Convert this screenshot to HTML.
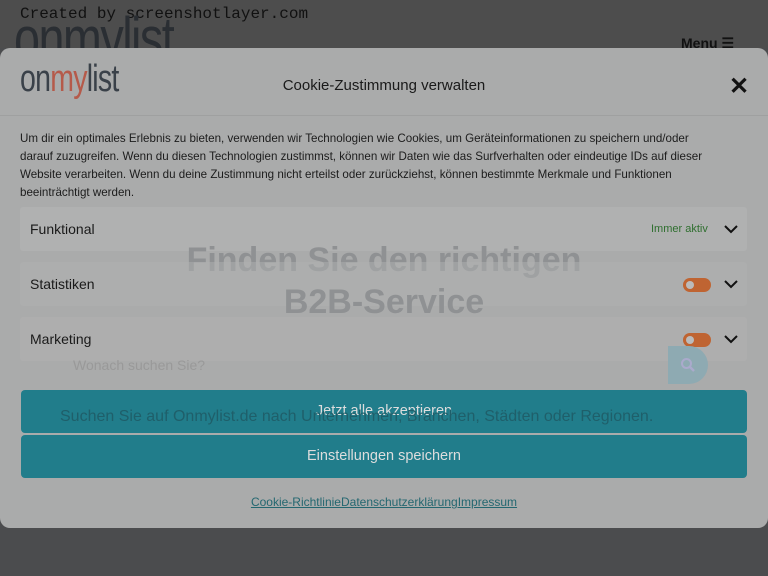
<!DOCTYPE html>
<html><head><meta charset="utf-8"><style>
*{margin:0;padding:0;box-sizing:border-box}
body{width:768px;height:576px;overflow:hidden;background:#4b4c4e;font-family:"Liberation Sans",sans-serif;position:relative}
.top{position:absolute;left:0;top:0;width:768px;height:48px;background:#4d4d4d}
.cr{position:absolute;left:20px;top:5px;font-family:"Liberation Mono",monospace;font-size:16px;color:#111}
.biglogo{position:absolute;left:14px;top:4px;font-size:60px;letter-spacing:-2px;color:#2a2e33;font-family:"Liberation Sans Narrow","Liberation Sans",sans-serif;transform:scaleX(.78);transform-origin:left}
.menu{position:absolute;left:681px;top:35px;font-size:14px;font-weight:bold;color:#111}
.modal{position:absolute;left:0;top:48px;width:768px;height:480px;background:#aaabab;border-radius:10px}
.logo{position:absolute;left:20px;top:10px;font-size:38px;color:#3a4149;letter-spacing:-1px;font-family:"Liberation Sans Narrow","Liberation Sans",sans-serif;transform:scaleX(.75);transform-origin:left}
.logo span{color:#b55a4a}
.title{position:absolute;left:0;width:768px;top:29px;text-align:center;font-size:15px;color:#1a1a1a}
.x{position:absolute;left:729px;top:24px;font-size:24px;font-weight:bold;color:#111}
.hr{position:absolute;left:0;top:67px;width:768px;height:1px;background:#9fa0a0}
.txt{position:absolute;left:20px;top:82px;width:705px;font-size:11.6px;line-height:18px;color:#1c1c1c}
.row{position:absolute;left:20px;width:727px;height:44px;background:#b0b1b1;border-radius:3px}
.row .l{position:absolute;left:10px;top:14px;font-size:14px;color:#1a1a1a}
.chev{position:absolute;left:703px;top:16px}
.tog{position:absolute;left:663px;top:16px;width:28px;height:14px;border-radius:7px;background:#bf6432}
.tog:after{content:"";position:absolute;left:3px;top:3px;width:8px;height:8px;border-radius:50%;background:#bbb}
.bg1{position:absolute;left:0;width:768px;text-align:center;font-size:34px;font-weight:bold;color:#8f9193}
.btn{position:absolute;left:21px;width:726px;height:43px;background:#217d8b;border-radius:4px;color:#ddd;text-align:center;font-size:14.5px;line-height:43px}
.sub{position:absolute;left:60px;top:360px;font-size:16px;color:#1f5f6a}
.links{position:absolute;left:0;width:768px;top:447px;text-align:center;font-size:12px;color:#246770;text-decoration:underline}
.search{position:absolute;left:668px;top:298px;width:40px;height:38px;background:#8eaab2;border-radius:0 19px 19px 0}
</style></head><body>
<div class="top"></div>
<div class="cr">Created by screenshotlayer.com</div>
<div class="biglogo">onmylist</div>
<div class="menu">Menu ☰</div>
<div class="modal">
 <div class="logo">on<span>my</span>list</div>
 <div class="title">Cookie-Zustimmung verwalten</div>
 <div class="x">✕</div>
 <div class="hr"></div>
 <div class="txt">Um dir ein optimales Erlebnis zu bieten, verwenden wir Technologien wie Cookies, um Geräteinformationen zu speichern und/oder<br>darauf zuzugreifen. Wenn du diesen Technologien zustimmst, können wir Daten wie das Surfverhalten oder eindeutige IDs auf dieser<br>Website verarbeiten. Wenn du deine Zustimmung nicht erteilst oder zurückziehst, können bestimmte Merkmale und Funktionen<br>beeinträchtigt werden.</div>
 <div class="row" style="top:159px"><div class="l">Funktional</div><div style="position:absolute;left:631px;top:16px;font-size:11px;color:#2f6f2f">Immer aktiv</div><svg class="chev" width="16" height="12" viewBox="0 0 16 12"><path d="M2 3l6 6 6-6" stroke="#111" stroke-width="2" fill="none"/></svg></div>
 <div class="bg1" style="top:193px">Finden Sie den richtigen</div>
 <div class="row" style="top:214px;background:rgba(176,177,177,.5)"><div class="l">Statistiken</div><div class="tog"></div><svg class="chev" width="16" height="12" viewBox="0 0 16 12"><path d="M2 3l6 6 6-6" stroke="#111" stroke-width="2" fill="none"/></svg></div>
 <div class="bg1" style="top:235px">B2B-Service</div>
 <div class="row" style="top:269px;background:rgba(176,177,177,.6)"><div class="l">Marketing</div><div class="tog"></div><svg class="chev" width="16" height="12" viewBox="0 0 16 12"><path d="M2 3l6 6 6-6" stroke="#111" stroke-width="2" fill="none"/></svg></div>
 <div style="position:absolute;left:73px;top:309px;font-size:14px;color:#999">Wonach suchen Sie?</div>
 <div class="search"><svg style="position:absolute;left:12px;top:11px" width="16" height="16" viewBox="0 0 16 16"><circle cx="6.5" cy="6.5" r="4.5" stroke="#aac" stroke-width="2" fill="none"/><path d="M10 10l4 4" stroke="#aac" stroke-width="2.5"/></svg></div>
 <div class="btn" style="top:342px">Jetzt alle akzeptieren</div>
 <div class="sub">Suchen Sie auf Onmylist.de nach Unternehmen, Branchen, Städten oder Regionen.</div>
 <div class="btn" style="top:387px">Einstellungen speichern</div>
 <div class="links">Cookie-RichtlinieDatenschutzerklärungImpressum</div>
</div>
</body></html>
